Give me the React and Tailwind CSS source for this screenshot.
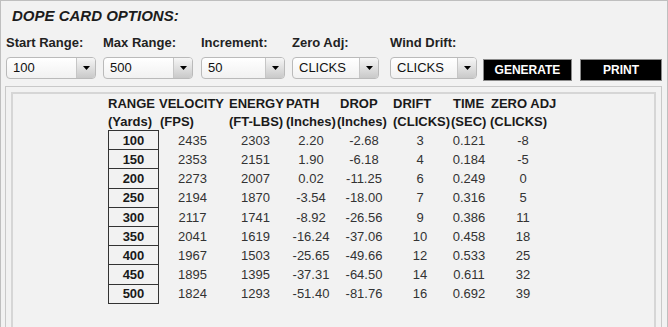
import React from 'react';

const font = { fontFamily: '"Liberation Sans", Arial, Helvetica, sans-serif' };

const options = [
  { label: 'Start Range:', value: '100', width: 'w-[90px]', gap: 'ml-[5px]' },
  { label: 'Max Range:', value: '500', width: 'w-[90px]', gap: 'ml-[7px]' },
  { label: 'Increment:', value: '50', width: 'w-[84px]', gap: 'ml-[8px]' },
  { label: 'Zero Adj:', value: 'CLICKS', width: 'w-[87px]', gap: 'ml-[7px]' },
  { label: 'Wind Drift:', value: 'CLICKS', width: 'w-[87px]', gap: 'ml-[11px]' },
];

// column widths + header offsets, taken from the card layout
const columns = [
  { w: 'w-[51px]', top: 'RANGE', sub: '(Yards)', pt: 'pl-0', ps: 'pl-0' },
  { w: 'w-[67px]', top: 'VELOCITY', sub: '(FPS)', pt: 'pl-0', ps: 'pl-[1px]' },
  { w: 'w-[59px]', top: 'ENERGY', sub: '(FT-LBS)', pt: 'pl-[3px]', ps: 'pl-[3px]' },
  { w: 'w-[52px]', top: 'PATH', sub: '(Inches)', pt: 'pl-[1px]', ps: 'pl-[1px]' },
  { w: 'w-[54px]', top: 'DROP', sub: '(Inches)', pt: 'pl-[3px]', ps: 'pl-0' },
  { w: 'w-[58px]', top: 'DRIFT', sub: '(CLICKS)', pt: 'pl-[2px]', ps: 'pl-[2px]' },
  { w: 'w-[40px]', top: 'TIME', sub: '(SEC)', pt: 'pl-[4px]', ps: 'pl-[2px]' },
  { w: 'w-[68px]', top: 'ZERO ADJ', sub: '(CLICKS)', pt: 'pl-[2px]', ps: 'pl-[1px]' },
];

const rows = [
  ['100', '2435', '2303', '2.20', '-2.68', '3', '0.121', '-8'],
  ['150', '2353', '2151', '1.90', '-6.18', '4', '0.184', '-5'],
  ['200', '2273', '2007', '0.02', '-11.25', '6', '0.249', '0'],
  ['250', '2194', '1870', '-3.54', '-18.00', '7', '0.316', '5'],
  ['300', '2117', '1741', '-8.92', '-26.56', '9', '0.386', '11'],
  ['350', '2041', '1619', '-16.24', '-37.06', '10', '0.458', '18'],
  ['400', '1967', '1503', '-25.65', '-49.66', '12', '0.533', '25'],
  ['450', '1895', '1395', '-37.31', '-64.50', '14', '0.611', '32'],
  ['500', '1824', '1293', '-51.40', '-81.76', '16', '0.692', '39'],
];

const Select = ({ value, width }) => (
  <div className={`${width} h-[22px] flex rounded-[4px] border border-[#bababa] bg-gradient-to-b from-white to-[#f1f1f1] overflow-hidden`}>
    <div className="flex-1 pl-[6px] text-[13px] leading-[20px] text-[#111]">{value}</div>
    <div className="w-[19px] flex items-center justify-center border-l border-[#c6c6c6] bg-gradient-to-b from-[#f6f6f6] to-[#c9c9c9]">
      <svg width="7" height="4" viewBox="0 0 7 4">
        <polygon points="0,0 7,0 3.5,4" fill="#000" />
      </svg>
    </div>
  </div>
);

export default function App() {
  return (
    <div style={font} className="w-[668px] h-[327px] overflow-hidden bg-[#f2f2f2] border border-b-0 border-[#bfbfbf] text-[#222]">
      <div className="pt-[6px] pl-[11px] text-[15px] leading-[18px] font-bold italic text-[#1c1c1c]">
        DOPE CARD OPTIONS:
      </div>

      {/* Options row */}
      <div className="mt-[10px] flex">
        {options.map((o) => (
          <div key={o.label} className={`${o.gap} flex flex-col`}>
            <div className="h-[15px] text-[13px] leading-[15px] font-bold whitespace-nowrap">{o.label}</div>
            <div className="mt-[7px]">
              <Select value={o.value} width={o.width} />
            </div>
          </div>
        ))}
        <div className="ml-[6px] mt-[22px]">
          <button className="w-[89px] h-[22px] bg-black border border-[#8a8a8a] text-white text-[12px] font-bold leading-[20px] [text-shadow:0_0_1px_#000]">
            GENERATE
          </button>
        </div>
        <div className="ml-[8px] mt-[22px]">
          <button className="w-[82px] h-[22px] bg-black border border-[#8a8a8a] text-white text-[12px] font-bold leading-[20px] [text-shadow:0_0_1px_#000]">
            PRINT
          </button>
        </div>
      </div>

      {/* Result panel */}
      <div className="mt-[5px] ml-[4px] w-[657px] h-[250px] border border-b-0 border-[#c9c9c9] px-[5px] pt-[5px]">
        <div className="h-full border-2 border-b-0 border-[#d6d6d6] pt-[1px]">
          <div className="ml-[95px] w-[449px]">
            <div className="flex h-[18px] text-[13px] leading-[18px] font-bold text-[#1a1a1a] whitespace-nowrap">
              {columns.map((c) => (
                <div key={c.top} className={`${c.w} ${c.pt}`}>{c.top}</div>
              ))}
            </div>
            <div className="flex h-[17px] text-[13px] leading-[18px] font-bold text-[#1a1a1a] whitespace-nowrap">
              {columns.map((c, i) => (
                <div key={i} className={`${c.w} ${c.ps}`}>{c.sub}</div>
              ))}
            </div>
            {rows.map((r, ri) => (
              <div key={r[0]} className={`flex ${ri === 0 ? 'h-[20.2px]' : 'h-[19.2px]'} text-[13px]`}>
                {r.map((v, ci) => (
                  <div
                    key={ci}
                    className={`${columns[ci].w} flex items-center justify-center pt-[1px] border-b ${ri === 0 ? 'border-t' : ''} ${
                      ci === 0
                        ? 'border-x border-[#333] font-bold text-[#1a1a1a]'
                        : 'border-transparent text-[#333]'
                    }`}
                  >
                    {v}
                  </div>
                ))}
              </div>
            ))}
          </div>
        </div>
      </div>
    </div>
  );
}
